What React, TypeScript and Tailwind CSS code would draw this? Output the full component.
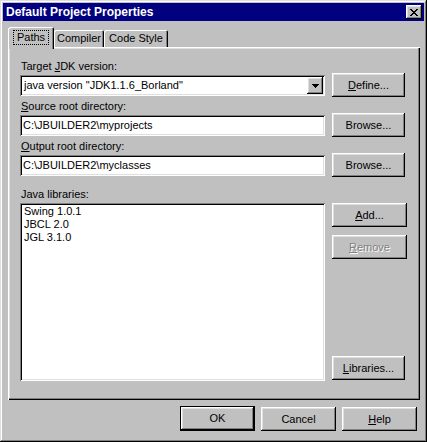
import type { ReactNode } from 'react';

const raised =
  'shadow-[inset_-1px_-1px_#000,inset_1px_1px_#fff,inset_-2px_-2px_#808080,inset_2px_2px_#dfdfdf]';
const sunken =
  'shadow-[inset_1px_1px_#808080,inset_-1px_-1px_#fff,inset_2px_2px_#000,inset_-2px_-2px_#dfdfdf]';

function Button({
  children,
  width = 'w-[73px]',
  isDefault = false,
  disabled = false,
  className = '',
}: {
  children: ReactNode;
  width?: string;
  isDefault?: boolean;
  disabled?: boolean;
  className?: string;
}) {
  if (isDefault) {
    return (
      <div className={`${width} h-[25px] border border-black bg-[#c0c0c0] ${className}`}>
        <div className={`flex h-full w-full items-center justify-center ${raised}`}>{children}</div>
      </div>
    );
  }
  return (
    <div
      className={`flex ${width} h-[24px] items-center justify-center bg-[#c0c0c0] ${raised} ${
        disabled ? 'text-[#808080] [text-shadow:1px_1px_#fff]' : ''
      } ${className}`}
    >
      {children}
    </div>
  );
}

function Label({ children, className = '' }: { children: ReactNode; className?: string }) {
  return <div className={`h-[14px] pl-[1px] leading-[14px] ${className}`}>{children}</div>;
}

function TextField({ value }: { value: string }) {
  return (
    <div className={`mt-[2px] flex h-[21px] w-[305px] items-center bg-white pl-[3px] ${sunken}`}>{value}</div>
  );
}

export default function App() {
  return (
    <div className="h-[442px] w-[427px] bg-[#c0c0c0] font-['Liberation_Sans',Arial,sans-serif] text-[11px] text-black">
      <div className="flex h-full w-full flex-col p-[3px] shadow-[inset_-1px_-1px_#000,inset_1px_1px_#dfdfdf,inset_-2px_-2px_#808080,inset_2px_2px_#fff]">
        {/* title bar */}
        <div className="flex h-[18px] items-center justify-between bg-[#000080] pl-[3px] pr-[2px]">
          <span className="text-[12px] font-bold text-white">Default Project Properties</span>
          <div className={`flex h-[14px] w-[16px] items-center justify-center bg-[#c0c0c0] ${raised}`}>
            <svg width="8" height="7" viewBox="0 0 8 7" shapeRendering="crispEdges">
              <path
                d="M0 0h2v1h-2zM6 0h2v1h-2zM1 1h2v1h-2zM5 1h2v1h-2zM2 2h4v1h-4zM3 3h2v1h-2zM2 4h4v1h-4zM1 5h2v1h-2zM5 5h2v1h-2zM0 6h2v1h-2zM6 6h2v1h-2z"
                fill="#000"
              />
            </svg>
          </div>
        </div>

        {/* tabs + panel */}
        <div className="flex flex-col px-[5px] pt-[6px]">
          <div className="flex h-[20px] items-end">
            <div className="relative z-10 -mb-[2px] flex h-[22px] w-[46px] items-start justify-center rounded-tl-[3px] rounded-tr-[2px] bg-[#c0c0c0] pt-[4px] shadow-[inset_1px_1px_#fff,inset_-1px_0_#000,inset_-2px_0_#808080]">
              <span className="px-[3px] leading-[13px] outline outline-1 outline-dotted outline-black">Paths</span>
            </div>
            <div className="flex h-[17px] w-[50px] items-center justify-center rounded-t-[2px] shadow-[inset_1px_1px_#fff,inset_-1px_0_#000,inset_-2px_0_#808080]">
              Compiler
            </div>
            <div className="flex h-[17px] w-[64px] items-center justify-center rounded-t-[2px] shadow-[inset_1px_1px_#fff,inset_-1px_0_#000,inset_-2px_0_#808080]">
              Code Style
            </div>
          </div>

          <div
            className={`flex h-[353px] w-[412px] flex-col pl-[12px] pt-[12px] shadow-[inset_1px_1px_#fff,inset_-1px_-1px_#000,inset_-2px_-2px_#808080,inset_2px_2px_#dfdfdf]`}
          >
            <Label>
              Target <u>J</u>DK version:
            </Label>
            <div className="flex h-[24px] items-start">
              <div className={`mt-[2px] flex h-[21px] w-[305px] items-center justify-between bg-white pl-[4px] pr-[2px] ${sunken}`}>
                <span>java version "JDK1.1.6_Borland"</span>
                <div className={`flex h-[17px] w-[16px] items-center justify-center bg-[#c0c0c0] ${raised}`}>
                  <svg width="7" height="4" viewBox="0 0 7 4" shapeRendering="crispEdges">
                    <path d="M0 0h7v1h-7zM1 1h5v1h-5zM2 2h3v1h-3zM3 3h1v1h-1z" fill="#000" />
                  </svg>
                </div>
              </div>
              <Button className="ml-[7px]">
                <span>
                  <u>D</u>efine...
                </span>
              </Button>
            </div>

            <Label className="mt-[2px]">
              <u>S</u>ource root directory:
            </Label>
            <div className="flex h-[24px] items-start">
              <TextField value="C:\JBUILDER2\myprojects" />
              <Button className="ml-[7px]">Browse...</Button>
            </div>

            <Label className="mt-[2px]">
              <u>O</u>utput root directory:
            </Label>
            <div className="flex h-[24px] items-start">
              <TextField value="C:\JBUILDER2\myclasses" />
              <Button className="ml-[7px]">Browse...</Button>
            </div>

            <Label className="mt-[10px] h-[16px]">Java libraries:</Label>
            <div className="flex h-[178px] items-stretch">
              <div className={`flex w-[305px] flex-col bg-white pl-[4px] pt-[2px] leading-[13px] ${sunken}`}>
                <span>Swing 1.0.1</span>
                <span>JBCL 2.0</span>
                <span>JGL 3.1.0</span>
              </div>
              <div className="ml-[7px] flex flex-col">
                <Button width="w-[75px]">
                  <span>
                    <u>A</u>dd...
                  </span>
                </Button>
                <Button width="w-[75px]" disabled className="mt-[8px]">
                  <span>
                    <u>R</u>emove
                  </span>
                </Button>
                <div className="flex-1" />
                <Button className="mb-[1px]">
                  <span>
                    <u>L</u>ibraries...
                  </span>
                </Button>
              </div>
            </div>
          </div>
        </div>

        {/* footer */}
        <div className="flex justify-end gap-[6px] pr-[7px] pt-[6px]">
          <Button width="w-[75px]" isDefault>
            OK
          </Button>
          <Button width="w-[75px]" className="mt-[1px]">
            Cancel
          </Button>
          <Button width="w-[75px]" className="mt-[1px]">
            <span>
              <u>H</u>elp
            </span>
          </Button>
        </div>
      </div>
    </div>
  );
}
